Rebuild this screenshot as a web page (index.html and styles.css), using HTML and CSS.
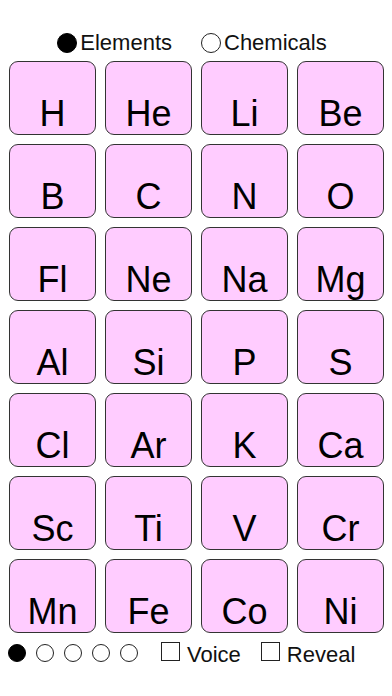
FILE: index.html
```html
<!DOCTYPE html>
<html>
<head>
<meta charset="utf-8">
<link rel="stylesheet" href="styles.css">
</head>
<body>
<div class="top">
  <div class="opt"><span class="radio on"></span>Elements</div>
  <div class="opt"><span class="radio"></span>Chemicals</div>
</div>
<div class="grid">
  <div class="tile">H</div><div class="tile">He</div><div class="tile">Li</div><div class="tile">Be</div>
  <div class="tile">B</div><div class="tile">C</div><div class="tile">N</div><div class="tile">O</div>
  <div class="tile">Fl</div><div class="tile">Ne</div><div class="tile">Na</div><div class="tile">Mg</div>
  <div class="tile">Al</div><div class="tile">Si</div><div class="tile">P</div><div class="tile">S</div>
  <div class="tile">Cl</div><div class="tile">Ar</div><div class="tile">K</div><div class="tile">Ca</div>
  <div class="tile">Sc</div><div class="tile">Ti</div><div class="tile">V</div><div class="tile">Cr</div>
  <div class="tile">Mn</div><div class="tile">Fe</div><div class="tile">Co</div><div class="tile">Ni</div>
</div>
<div class="bottom">
  <div class="dots">
    <span class="dot on"></span><span class="dot"></span><span class="dot"></span><span class="dot"></span><span class="dot"></span>
  </div>
  <div class="check"><span class="box"></span>Voice</div>
  <div class="check"><span class="box"></span>Reveal</div>
</div>
</body>
</html>
```
FILE: styles.css
```css
html, body {
  margin: 0;
  padding: 0;
  background: #fff;
}
body {
  width: 392px;
  height: 696px;
  overflow: hidden;
  font-family: "Liberation Sans", Arial, sans-serif;
  color: #111;
}
.top {
  display: flex;
  justify-content: center;
  gap: 29px;
  height: 22px;
  margin-top: 32px;
  margin-bottom: 7px;
  padding-right: 8px;
  font-size: 22px;
}
.opt {
  display: flex;
  align-items: center;
  gap: 3px;
  line-height: 24px;
}
.radio {
  width: 18px;
  height: 18px;
  border: 1px solid #222;
  border-radius: 50%;
  background: #fff;
}
.radio.on {
  background: #000;
  border-color: #000;
}
.grid {
  display: grid;
  grid-template-columns: repeat(4, 87px);
  grid-auto-rows: 74px;
  gap: 9px;
  padding-left: 9px;
}
.tile {
  box-sizing: border-box;
  background: #ffccff;
  border: 1px solid #333;
  border-radius: 9px;
  display: flex;
  align-items: flex-end;
  justify-content: center;
  font-size: 36px;
  line-height: 1;
  padding-bottom: 2px;
  color: #000;
}
.bottom {
  display: flex;
  align-items: flex-start;
  margin-top: 9px;
  padding-left: 8px;
  font-size: 22px;
}
.dots {
  display: flex;
  gap: 10px;
  margin-top: 2px;
  margin-right: 23px;
}
.dot {
  width: 16px;
  height: 16px;
  border: 1px solid #222;
  border-radius: 50%;
  background: #fff;
}
.dot.on {
  background: #000;
  border-color: #000;
}
.check {
  display: flex;
  align-items: flex-start;
  gap: 7px;
  margin-right: 20px;
  line-height: 26px;
}
.box {
  width: 17px;
  height: 17px;
  border: 1px solid #222;
  background: #fff;
}
```
